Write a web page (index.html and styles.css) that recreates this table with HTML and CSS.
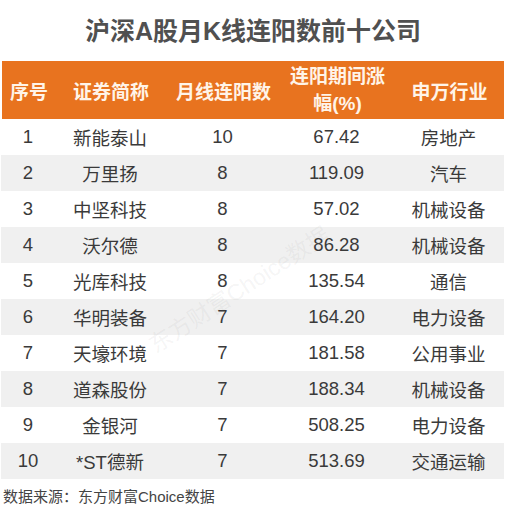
FILE: index.html
```html
<!DOCTYPE html>
<html lang="zh-CN">
<head>
<meta charset="utf-8">
<link rel="stylesheet" href="styles.css">
</head>
<body>
<div class="page">
  <h1 class="title">沪深A股月K线连阳数前十公司</h1>
  <div class="table">
    <div class="row head">
      <div>序号</div><div>证券简称</div><div>月线连阳数</div><div class="two">连阳期间涨<br>幅(%)</div><div>申万行业</div>
    </div>
    <div class="row"><div>1</div><div>新能泰山</div><div>10</div><div>67.42</div><div>房地产</div></div>
    <div class="row alt"><div>2</div><div>万里扬</div><div>8</div><div>119.09</div><div>汽车</div></div>
    <div class="row"><div>3</div><div>中坚科技</div><div>8</div><div>57.02</div><div>机械设备</div></div>
    <div class="row alt"><div>4</div><div>沃尔德</div><div>8</div><div>86.28</div><div>机械设备</div></div>
    <div class="row"><div>5</div><div>光库科技</div><div>8</div><div>135.54</div><div>通信</div></div>
    <div class="row alt"><div>6</div><div>华明装备</div><div>7</div><div>164.20</div><div>电力设备</div></div>
    <div class="row"><div>7</div><div>天壕环境</div><div>7</div><div>181.58</div><div>公用事业</div></div>
    <div class="row alt"><div>8</div><div>道森股份</div><div>7</div><div>188.34</div><div>机械设备</div></div>
    <div class="row"><div>9</div><div>金银河</div><div>7</div><div>508.25</div><div>电力设备</div></div>
    <div class="row alt"><div>10</div><div>*ST德新</div><div>7</div><div>513.69</div><div>交通运输</div></div>
    <div class="watermark">东方财富Choice数据</div>
  </div>
  <p class="source">数据来源：东方财富Choice数据</p>
</div>
</body>
</html>
```

FILE: styles.css
```css
html, body {
  margin: 0;
  padding: 0;
  background: #ffffff;
}
.page {
  width: 506px;
  height: 514px;
  font-family: "Liberation Sans", "Noto Sans CJK SC", sans-serif;
  color: #3a3a3a;
  overflow: hidden;
}
.title {
  margin: 0;
  height: 61px;
  line-height: 63px;
  text-align: center;
  font-size: 25px;
  font-weight: bold;
  color: #505050;
  font-family: "Liberation Sans", "Noto Sans CJK SC", sans-serif;
}
.table {
  position: relative;
  margin: 0 2px 0 1px;
}
.row {
  display: grid;
  grid-template-columns: 54px 110px 115px 113px 111px;
  height: 36px;
  align-items: center;
  text-align: center;
  font-size: 18.5px;
  background: #ffffff;
}
.row.alt {
  background: #f0f0f0;
}
.row.head {
  height: 58px;
  background: #e8731f;
  color: #fff4e8;
  font-weight: bold;
  font-size: 19px;
  margin-left: 1px;
}
.row.head .two {
  line-height: 27px;
}
.watermark {
  position: absolute;
  left: 140px;
  top: 270px;
  font-size: 23px;
  color: rgba(120, 120, 120, 0.08);
  transform: rotate(-33deg);
  transform-origin: left top;
  white-space: nowrap;
  pointer-events: none;
}
.source {
  margin: 7px 0 0 3px;
  font-size: 15px;
  line-height: 22px;
  color: #444444;
}
```
